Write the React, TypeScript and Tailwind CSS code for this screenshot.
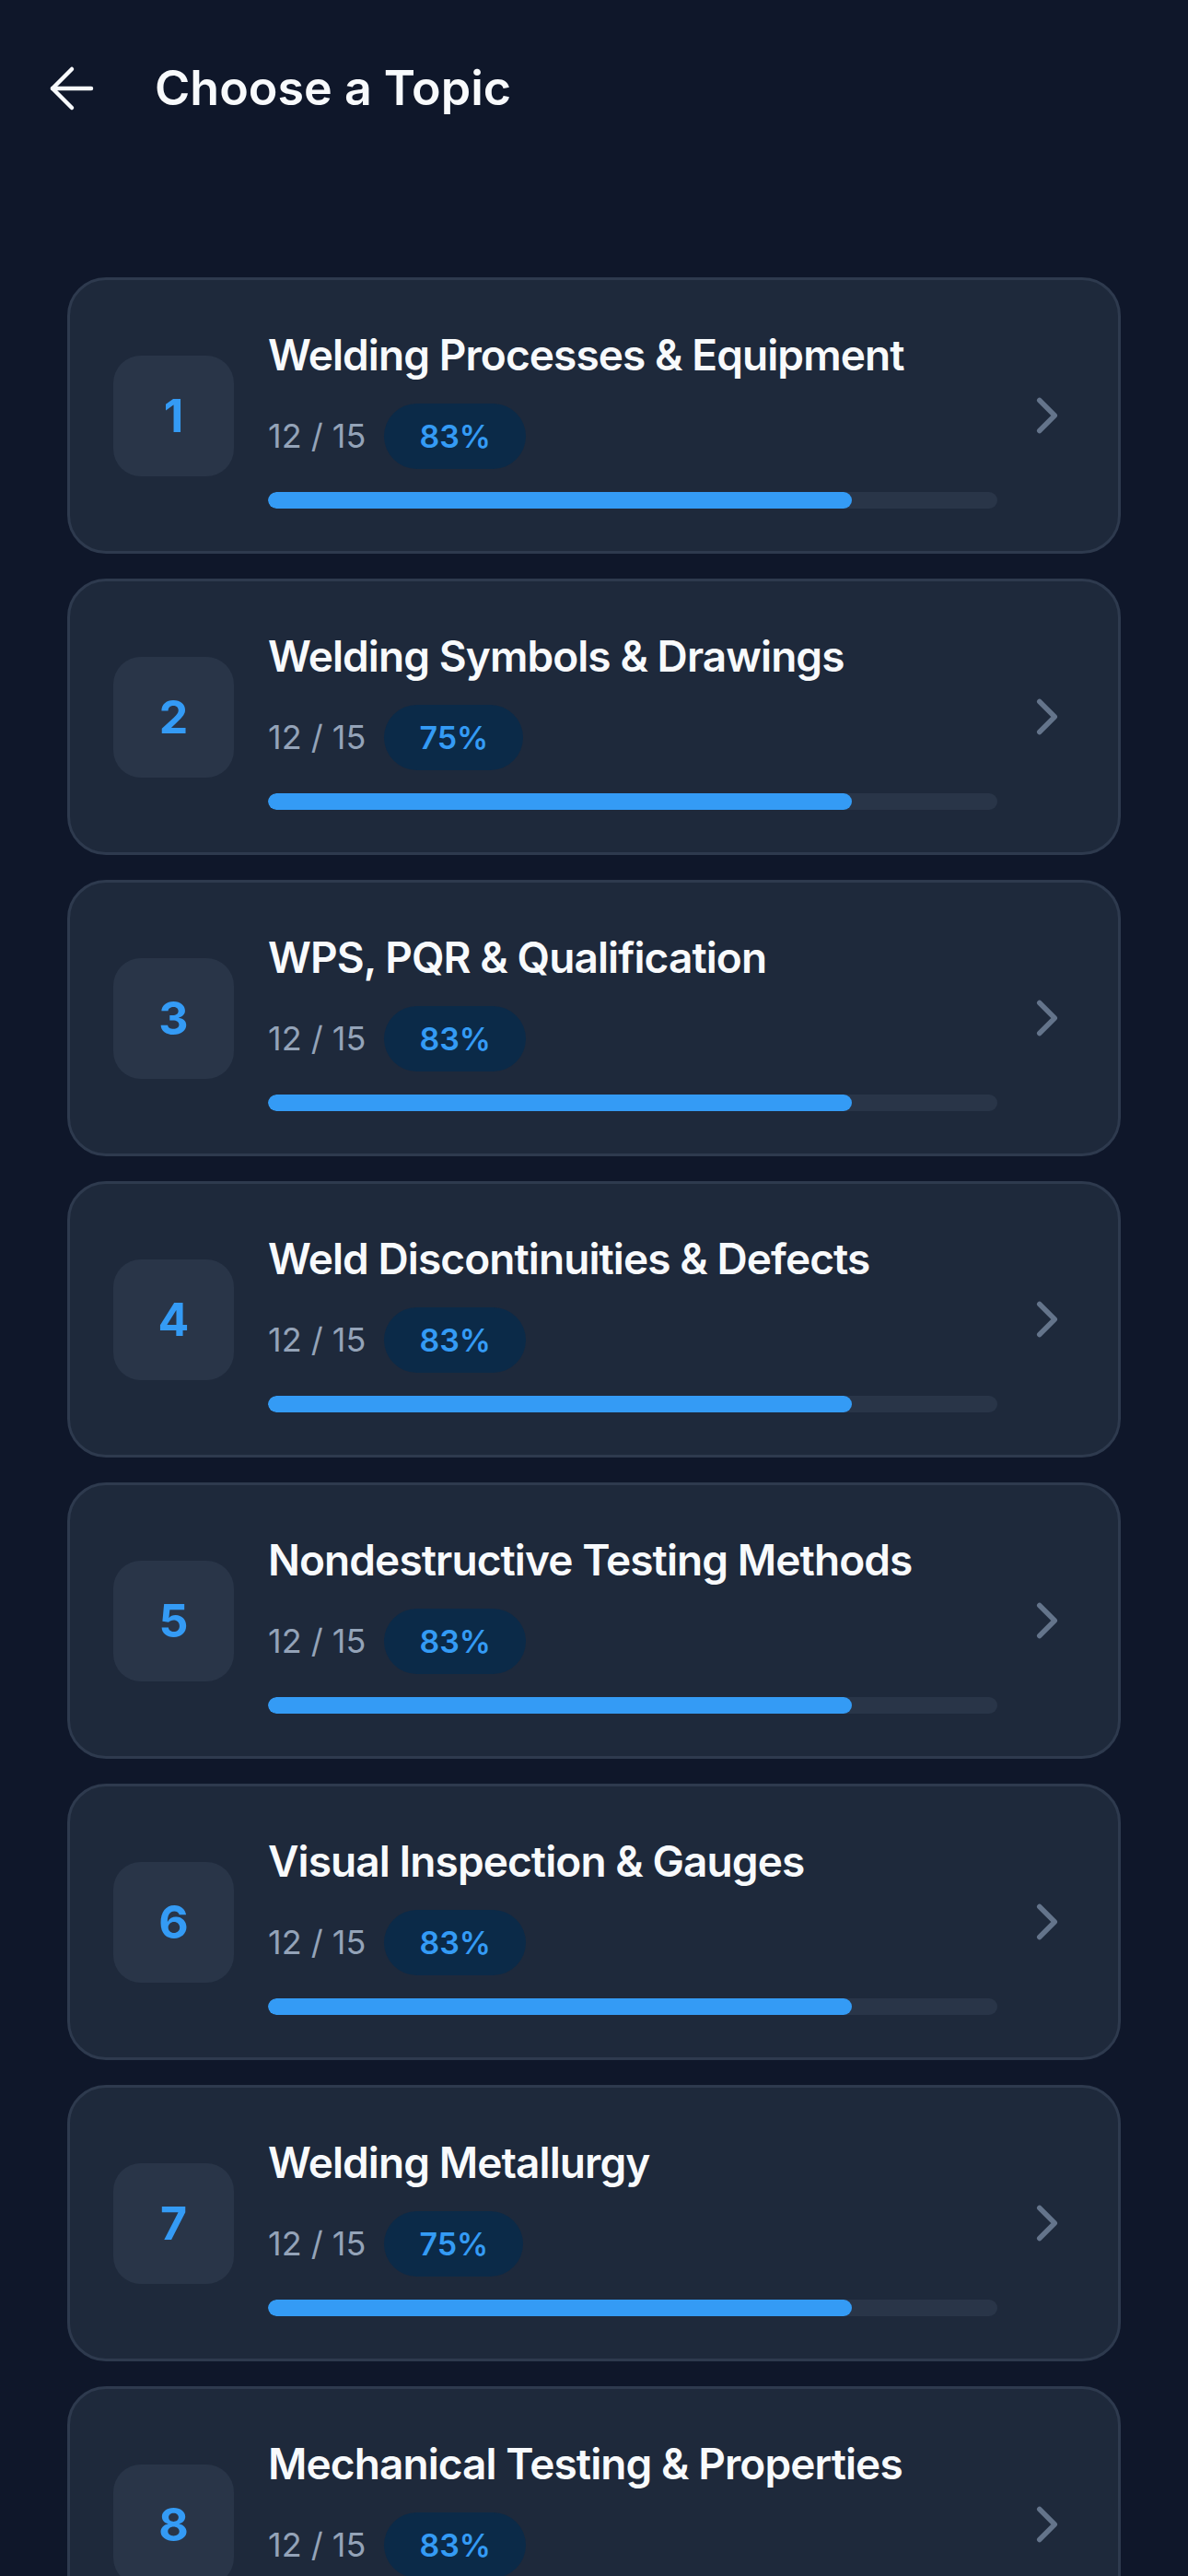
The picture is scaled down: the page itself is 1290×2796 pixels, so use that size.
import { ArrowLeft, ChevronRight } from 'lucide-react'

interface Topic {
  id: number
  title: string
  done: number
  total: number
  score: number
}

const topics: Topic[] = [
  { id: 1, title: 'Welding Processes & Equipment', done: 12, total: 15, score: 83 },
  { id: 2, title: 'Welding Symbols & Drawings', done: 12, total: 15, score: 75 },
  { id: 3, title: 'WPS, PQR & Qualification', done: 12, total: 15, score: 83 },
  { id: 4, title: 'Weld Discontinuities & Defects', done: 12, total: 15, score: 83 },
  { id: 5, title: 'Nondestructive Testing Methods', done: 12, total: 15, score: 83 },
  { id: 6, title: 'Visual Inspection & Gauges', done: 12, total: 15, score: 83 },
  { id: 7, title: 'Welding Metallurgy', done: 12, total: 15, score: 75 },
  { id: 8, title: 'Mechanical Testing & Properties', done: 12, total: 15, score: 83 },
]

function TopicCard({ topic }: { topic: Topic }) {
  const pct = (topic.done / topic.total) * 100
  return (
    <button className="flex h-[300px] w-full items-center rounded-[42px] border-[3px] border-[#2e3a4e] bg-[#1e293b] pl-[47px] pr-[44px] text-left">
      <div className="flex h-[131px] w-[131px] shrink-0 items-center justify-center rounded-[30px] bg-[#293548]">
        <span className="text-[50px] font-bold text-[#349bf5]">{topic.id}</span>
      </div>
      <div className="ml-[37px] flex min-w-0 flex-1 flex-col pt-[6px]">
        <p className="text-[46px] font-semibold leading-[56px] tracking-[-0.02em] text-[#f8fafc]">
          {topic.title}
        </p>
        <div className="mt-[25px] flex items-center gap-[20px]">
          <span className="text-[36px] text-[#94a3b8]">
            {topic.done} / {topic.total}
          </span>
          <span className="flex h-[71px] items-center rounded-full bg-[#0b2a48] px-[38px] text-[34px] font-semibold text-[#349bf5]">
            {topic.score}%
          </span>
        </div>
        <div className="mt-[25px] h-[18px] w-full overflow-hidden rounded-full bg-[#293548]">
          <div className="h-full rounded-full bg-[#349bf5]" style={{ width: `${pct}%` }} />
        </div>
      </div>
      <ChevronRight className="ml-[21px] h-[66px] w-[66px] shrink-0 text-[#64748b]" strokeWidth={2} />
    </button>
  )
}

export default function App() {
  return (
    <div
      className="h-screen overflow-hidden bg-[#0f172a]"
      style={{ fontFamily: 'Inter, "Noto Sans", sans-serif' }}
    >
      <header className="flex h-[192px] items-center pl-[42px]">
        <button aria-label="Back" className="flex h-[72px] w-[72px] items-center justify-center text-[#f8fafc]">
          <ArrowLeft className="h-[72px] w-[72px]" strokeWidth={1.5} />
        </button>
        <h1 className="ml-[54px] text-[52px] font-semibold text-[#f8fafc]">Choose a Topic</h1>
      </header>

      <div className="flex flex-col gap-[27px] px-[73px] pt-[109px]">
        {topics.map((t) => (
          <TopicCard key={t.id} topic={t} />
        ))}
      </div>
    </div>
  )
}
